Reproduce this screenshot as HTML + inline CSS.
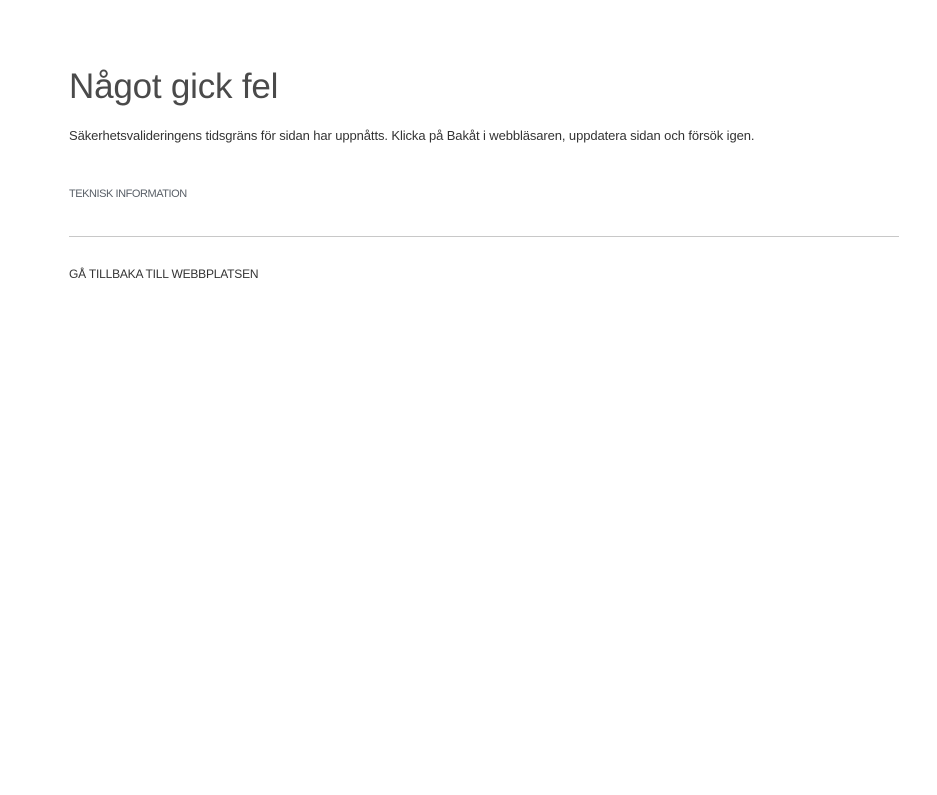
<!DOCTYPE html>
<html><head><meta charset="utf-8"><style>
html,body{margin:0;padding:0;background:#fff;}
body{width:937px;height:795px;position:relative;font-family:"Liberation Sans",sans-serif;color:#333;}
.t{position:absolute;left:69px;top:67px;font-size:35px;color:#4a4a4a;white-space:nowrap;letter-spacing:-0.2px;}
.m{position:absolute;left:69px;top:128px;font-size:13px;color:#333;white-space:nowrap;letter-spacing:-0.1px;}
.ti{position:absolute;left:69px;top:188px;font-size:11px;color:#5a6068;white-space:nowrap;letter-spacing:-0.45px;}
.hr{position:absolute;left:69px;top:236px;width:830px;height:1px;background:#c8c8c8;}
.b{position:absolute;left:69px;top:267px;font-size:12px;color:#333;white-space:nowrap;letter-spacing:-0.2px;}
</style></head><body>
<div class="t">Något gick fel</div>
<div class="m">Säkerhetsvalideringens tidsgräns för sidan har uppnåtts. Klicka på Bakåt i webbläsaren, uppdatera sidan och försök igen.</div>
<div class="ti">TEKNISK INFORMATION</div>
<div class="hr"></div>
<div class="b">GÅ TILLBAKA TILL WEBBPLATSEN</div>
</body></html>
